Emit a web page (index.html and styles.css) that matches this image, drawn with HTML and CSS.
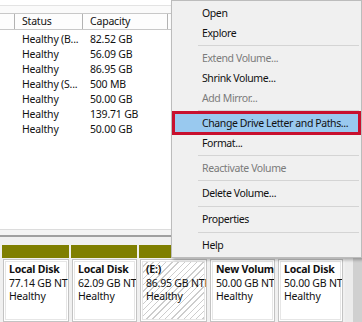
FILE: index.html
```html
<!DOCTYPE html>
<html>
<head>
<meta charset="utf-8">
<link rel="stylesheet" href="styles.css">
</head>
<body>
<div class="screen">
  <div class="list-pane">
    <div class="topstrip"></div>
    <div class="header">
      <div class="hcell c0"></div>
      <div class="hcell c1">Status</div>
      <div class="hcell c2">Capacity</div>
      <div class="hcell c3"></div>
    </div>
    <div class="rows">
      <div class="row"><div class="cell c0"></div><div class="cell c1">Healthy (B...</div><div class="cell c2">82.52 GB</div></div>
      <div class="row"><div class="cell c0"></div><div class="cell c1">Healthy</div><div class="cell c2">56.09 GB</div></div>
      <div class="row"><div class="cell c0"></div><div class="cell c1">Healthy</div><div class="cell c2">86.95 GB</div></div>
      <div class="row"><div class="cell c0"></div><div class="cell c1">Healthy (S...</div><div class="cell c2">500 MB</div></div>
      <div class="row"><div class="cell c0"></div><div class="cell c1">Healthy</div><div class="cell c2">50.00 GB</div></div>
      <div class="row"><div class="cell c0"></div><div class="cell c1">Healthy</div><div class="cell c2">139.71 GB</div></div>
      <div class="row"><div class="cell c0"></div><div class="cell c1">Healthy</div><div class="cell c2">50.00 GB</div></div>
    </div>
  </div>
  <div class="splitter"></div>
  <div class="disks">
    <div class="part p1"><div class="bar"></div><div class="box"><div class="name">Local Disk</div><div>77.14 GB NTFS</div><div>Healthy</div></div></div>
    <div class="part p2"><div class="bar"></div><div class="box"><div class="name">Local Disk</div><div>62.09 GB NTFS</div><div>Healthy</div></div></div>
    <div class="part p3"><div class="bar"></div><div class="box hatched"><div class="name">(E:)</div><div>86.95 GB NTFS</div><div>Healthy</div></div></div>
    <div class="part p4"><div class="bar"></div><div class="box"><div class="name">New Volume</div><div>50.00 GB NTFS</div><div>Healthy</div></div></div>
    <div class="part p5"><div class="bar"></div><div class="box"><div class="name">Local Disk</div><div>50.00 GB NTFS</div><div>Healthy</div></div></div>
    <div class="tail"></div>
  </div>

  <div class="menu">
    <div class="mi">Open</div>
    <div class="mi">Explore</div>
    <div class="sep"></div>
    <div class="mi dis">Extend Volume...</div>
    <div class="mi">Shrink Volume...</div>
    <div class="mi dis">Add Mirror...</div>
    <div class="sep"></div>
    <div class="mi sel">Change Drive Letter and Paths...<span class="mark"></span></div>
    <div class="mi">Format...</div>
    <div class="sep"></div>
    <div class="mi dis">Reactivate Volume</div>
    <div class="sep"></div>
    <div class="mi">Delete Volume...</div>
    <div class="sep tall"></div>
    <div class="mi">Properties</div>
    <div class="sep tall"></div>
    <div class="mi">Help</div>
  </div>
</div>
</body>
</html>
```

FILE: styles.css
```css
* { box-sizing: border-box; }
html, body { margin: 0; padding: 0; }
body {
  width: 362px;
  height: 322px;
  overflow: hidden;
  font-family: "Noto Sans", "Open Sans", sans-serif;
  font-size: 10.5px;
  letter-spacing: -0.2px;
  color: #111;
  background: #fff;
}
.screen {
  position: relative;
  width: 362px;
  height: 322px;
  overflow: hidden;
  display: flex;
  flex-direction: column;
}
.list-pane {
  height: 229px;
  flex: none;
  background: #fff;
  display: flex;
  flex-direction: column;
}
.topstrip {
  height: 13px;
  flex: none;
  background: linear-gradient(#fff 0 5px, #e3e3e3 5px 6px, #fafafa 6px);
}
.header {
  display: flex;
  height: 17px;
  flex: none;
  border-top: 1px solid #c8c8c8;
  border-bottom: 1px solid #c8c8c8;
  background: #fdfdfd;
}
.hcell {
  border-right: 1px solid #b3b3b3;
  padding-left: 7px;
  line-height: 15px;
  white-space: nowrap;
}
.c0 { width: 15px; flex: none; }
.c1 { width: 68px; flex: none; }
.c2 { width: 85px; flex: none; }
.c3 { flex: 1; border-right: none; }
.rows { padding-top: 2px; }
.row { display: flex; height: 15px; line-height: 15px; }
.cell { padding-left: 7px; white-space: nowrap; overflow: hidden; }

.splitter {
  height: 16px;
  flex: none;
  background: linear-gradient(#dcdcdc 0 1px, #f4f4f4 1px 6px, #a0a0a0 6px 8px, #f0f0f0 8px);
}

.disks {
  flex: 1;
  display: flex;
  gap: 2px;
  padding-left: 2px;
  background: #f0f0f0;
}
.part { display: flex; flex-direction: column; flex: none; }
.p1 { width: 67px; }
.p2 { width: 66px; }
.p3 { width: 68px; }
.p4 { width: 66px; }
.p5 { width: 66px; }
.bar { height: 13px; flex: none; background: #7f7f00; }
.box {
  flex: 1;
  margin: 1px 0 0 1px;
  background: #fff;
  border: 1px solid #c3c3c3;
  box-shadow: inset 0 0 0 1px #fff, inset 0 0 0 2px #e6e6e6;
  padding: 3px 5px;
  overflow: hidden;
  white-space: nowrap;
  line-height: 13.5px;
}
.name { font-weight: bold; }
.hatched {
  background: repeating-linear-gradient(-45deg, #fff 0 3.4px, #cdcdcd 3.4px 4.4px);
}
.tail {
  flex: 1;
  background: linear-gradient(90deg, #ececec 0 8px, #d0d0d0 8px);
}

.menu {
  position: absolute;
  left: 171px;
  top: 0;
  width: 191px;
  background: #f0f0f0;
  border: 1px solid #bcbcbc;
  padding: 2px;
  letter-spacing: -0.4px;
  box-shadow: 2px 2px 3px rgba(0, 0, 0, 0.28);
}
.mi {
  height: 20px;
  line-height: 20px;
  padding-left: 28px;
  white-space: nowrap;
  position: relative;
  color: #111;
}
.mi.dis { color: #7b7b7b; }
.mi.sel { background: #99c9ef; }
.mark {
  position: absolute;
  left: -2px;
  right: -2px;
  top: -2px;
  bottom: -2px;
  border: 3px solid #c8102e;
}
.sep {
  height: 5px;
  display: flex;
  align-items: center;
  padding-left: 24px;
}
.sep.tall { height: 6px; }
.sep::after {
  content: "";
  flex: 1;
  height: 1px;
  background: #d4d4d4;
}
```
